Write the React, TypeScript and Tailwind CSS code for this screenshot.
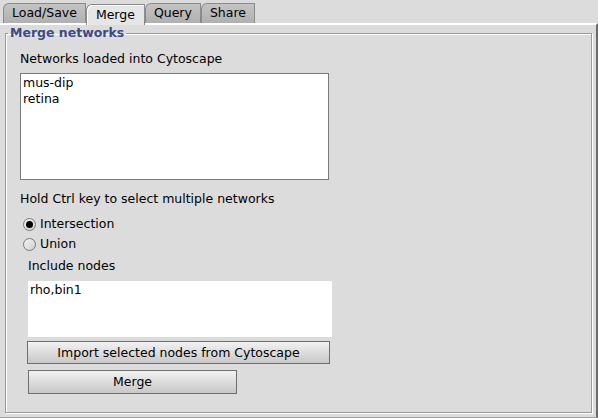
import { useState } from 'react';

const tabs = ['Load/Save', 'Merge', 'Query', 'Share'];
const networks = ['mus-dip', 'retina'];

const Radio = ({ checked, label, onClick }: { checked: boolean; label: string; onClick: () => void }) => (
  <div className="flex items-center h-[20px] cursor-default" onClick={onClick}>
    <span className="w-[13px] h-[13px] rounded-full border border-[#7a7a7a] bg-gradient-to-br from-[#f4f4f4] to-[#d0d0d0] flex items-center justify-center">
      {checked && <span className="w-[7px] h-[7px] rounded-full bg-black" />}
    </span>
    <span className="ml-[4px]">{label}</span>
  </div>
);

const App = () => {
  const [mode, setMode] = useState<'intersection' | 'union'>('intersection');
  const active = 'Merge';

  return (
    <div
      className="w-[598px] h-[418px] bg-[#dcdcdc] flex flex-col text-[12.5px] text-black"
      style={{ fontFamily: '"DejaVu Sans", sans-serif' }}
    >
      {/* Tabs */}
      <div className="flex items-end pl-[3px] h-[23px]">
        {tabs.map((t) =>
          t === active ? (
            <div
              key={t}
              className="h-[21px] px-[9px] flex items-center bg-[#e6e6e6] border border-b-0 border-[#8a8a8a] shadow-[inset_1px_1px_0_#ffffff] rounded-tl-[6px] relative z-10 -mb-[2px]"
            >
              {t}
            </div>
          ) : (
            <div
              key={t}
              className="h-[20px] px-[8px] flex items-center bg-gradient-to-b from-[#c4c4c4] to-[#b0b0b0] border border-b-0 border-[#8a8a8a] rounded-tl-[6px]"
            >
              {t}
            </div>
          )
        )}
      </div>

      {/* Content panel */}
      <div className="flex-1 border-t-2 border-t-white border-r-2 border-r-[#6a6a6a] border-b border-b-[#a0a0a0] pt-[1px] pl-[5px] pr-[4px] pb-[4px] flex">
        <fieldset className="flex-1 border border-[#9a9a9a] shadow-[inset_1px_1px_0_#ffffff,1px_1px_0_#ffffff] pl-[14px] pb-[6px] pt-[0px]">
          <legend className="ml-[-12px] px-[2px] font-bold text-[#3c4a88] leading-[14px]">Merge networks</legend>

          <div className="mt-[11px] leading-[16px]">Networks loaded into Cytoscape</div>
          <div className="mt-[6px] w-[309px] h-[107px] bg-white border border-[#7a7a7a] pl-[2px] pt-[1px] leading-[16px]">
            {networks.map((n) => (
              <div key={n}>{n}</div>
            ))}
          </div>

          <div className="mt-[11px] leading-[16px]">Hold Ctrl key to select multiple networks</div>
          <div className="mt-[7px] ml-[3px]">
            <Radio checked={mode === 'intersection'} label="Intersection" onClick={() => setMode('intersection')} />
            <Radio checked={mode === 'union'} label="Union" onClick={() => setMode('union')} />
          </div>

          <div className="ml-[8px]">
            <div className="mt-[4px] leading-[16px]">Include nodes</div>
            <div className="mt-[7px] w-[304px] h-[56px] bg-white pl-[2px] pt-[1px] leading-[16px]">rho,bin1</div>
            <button className="mt-[4px] w-[303px] h-[23px] border border-[#6e6e6e] bg-gradient-to-b from-[#f2f2f2] to-[#c8c8c8] text-center leading-[20px] -ml-px">
              Import selected nodes from Cytoscape
            </button>
            <button className="mt-[6px] w-[209px] h-[24px] border border-[#6e6e6e] bg-gradient-to-b from-[#f2f2f2] to-[#c8c8c8] text-center leading-[20px] block">
              Merge
            </button>
          </div>
        </fieldset>
      </div>
    </div>
  );
};

export default App;
